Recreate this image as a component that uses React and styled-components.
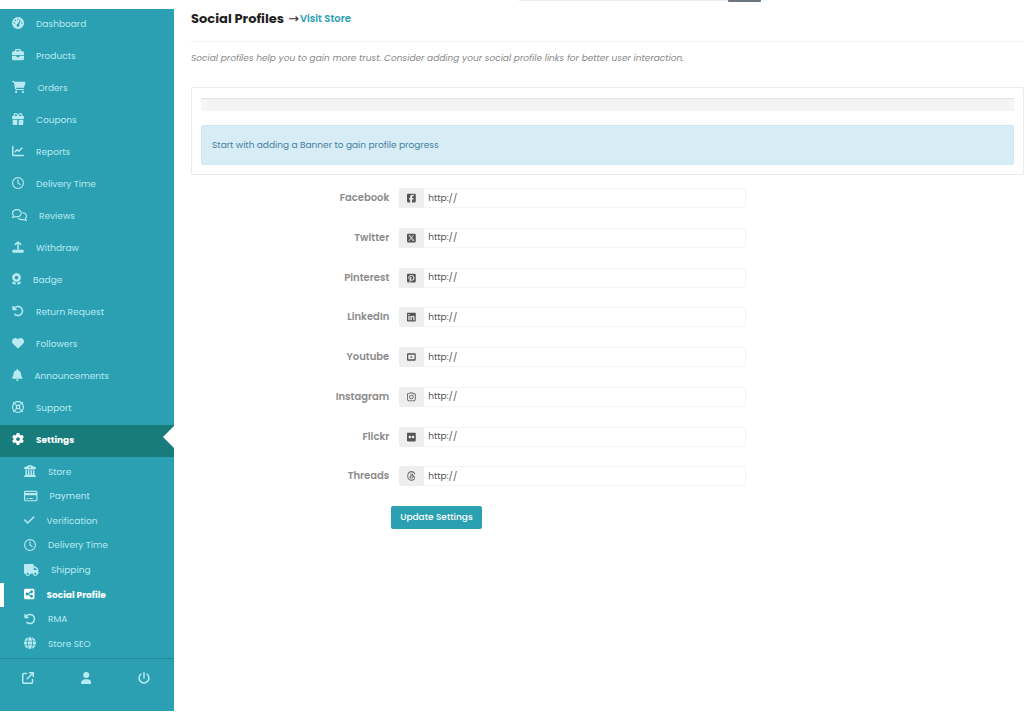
import styled, { createGlobalStyle, css } from "styled-components";
import { IconContext } from "react-icons";
import {
  FaArrowRotateLeft,
  FaArrowUpRightFromSquare,
  FaAward,
  FaBell,
  FaBriefcase,
  FaBuildingColumns,
  FaCartShopping,
  FaCheck,
  FaFlickr,
  FaGaugeHigh,
  FaGear,
  FaGift,
  FaGlobe,
  FaHeart,
  FaInstagram,
  FaLinkedin,
  FaPowerOff,
  FaRegClock,
  FaRegComments,
  FaRegCreditCard,
  FaRegLifeRing,
  FaSquareFacebook,
  FaSquarePinterest,
  FaSquareShareNodes,
  FaSquareXTwitter,
  FaThreads,
  FaTruck,
  FaUser,
} from "react-icons/fa6";

const ReportIcon = () => (
  <svg viewBox="0 0 512 512" fill="none" stroke="currentColor" strokeWidth="62" strokeLinecap="round" strokeLinejoin="round">
    <path d="M32 64v336c0 27 21 48 48 48h400M136 288l80-88 72 64 136-136" />
  </svg>
);

const UploadIcon = () => (
  <svg viewBox="0 0 512 512" fill="none" stroke="currentColor" strokeWidth="64" strokeLinecap="round" strokeLinejoin="round">
    <path d="M256 352V48M144 144L256 40l112 104" />
    <path d="M48 400h416v64H48z" fill="currentColor" />
  </svg>
);

const YoutubeIcon = () => (
  <svg viewBox="0 0 448 512" fill="currentColor">
    <path
      fillRule="evenodd"
      d="M64 64h320c35 0 64 29 64 64v256c0 35-29 64-64 64H64c-35 0-64-29-64-64V128c0-35 29-64 64-64zm0 96v192c0 9 7 16 16 16h288c9 0 16-7 16-16V160c0-9-7-16-16-16H80c-9 0-16 7-16 16zm122 34 102 62-102 62z"
    />
  </svg>
);

const menu = [
  { label: "Dashboard", icon: FaGaugeHigh },
  { label: "Products", icon: FaBriefcase },
  { label: "Orders", icon: FaCartShopping },
  { label: "Coupons", icon: FaGift },
  { label: "Reports", icon: ReportIcon },
  { label: "Delivery Time", icon: FaRegClock },
  { label: "Reviews", icon: FaRegComments },
  { label: "Withdraw", icon: UploadIcon },
  { label: "Badge", icon: FaAward },
  { label: "Return Request", icon: FaArrowRotateLeft },
  { label: "Followers", icon: FaHeart },
  { label: "Announcements", icon: FaBell },
  { label: "Support", icon: FaRegLifeRing },
  { label: "Settings", icon: FaGear, active: true },
];

const settings = [
  { label: "Store", icon: FaBuildingColumns },
  { label: "Payment", icon: FaRegCreditCard },
  { label: "Verification", icon: FaCheck },
  { label: "Delivery Time", icon: FaRegClock },
  { label: "Shipping", icon: FaTruck },
  { label: "Social Profile", icon: FaSquareShareNodes, active: true },
  { label: "RMA", icon: FaArrowRotateLeft },
  { label: "Store SEO", icon: FaGlobe },
];

const profiles = [
  { label: "Facebook", icon: FaSquareFacebook },
  { label: "Twitter", icon: FaSquareXTwitter },
  { label: "Pinterest", icon: FaSquarePinterest },
  { label: "LinkedIn", icon: FaLinkedin },
  { label: "Youtube", icon: YoutubeIcon },
  { label: "Instagram", icon: FaInstagram },
  { label: "Flickr", icon: FaFlickr },
  { label: "Threads", icon: FaThreads },
];

// "auto" lets each icon keep the width of its own view box
const iconContext = { size: "auto" };

export default function App() {
  return (
    <IconContext.Provider value={iconContext}>
      <GlobalStyle />
      <TopBar>
        <SearchInput aria-label="Search" />
        <SearchButton aria-label="Submit search" />
      </TopBar>
      <Layout>
        <Sidebar>
          <Menu>
            {menu.map(({ label, icon: Icon, active }) => (
              <li key={label}>
                <MenuLink href="#" $active={active}>
                  <Icon />
                  {label}
                </MenuLink>
              </li>
            ))}
          </Menu>
          <SubMenu>
            {settings.map(({ label, icon: Icon, active }) => (
              <li key={label}>
                <SubLink href="#" $active={active}>
                  <Icon />
                  {label}
                </SubLink>
              </li>
            ))}
          </SubMenu>
          <Shortcuts>
            <a href="#" aria-label="Visit store">
              <FaArrowUpRightFromSquare />
            </a>
            <a href="#" aria-label="Edit account">
              <FaUser />
            </a>
            <a href="#" aria-label="Log out">
              <FaPowerOff />
            </a>
          </Shortcuts>
        </Sidebar>
        <Content>
          <Header>
            <h1>Social Profiles</h1>
            <span>→</span>
            <a href="#">Visit Store</a>
          </Header>
          <Help>
            Social profiles help you to gain more trust. Consider adding your social profile links for better user
            interaction.
          </Help>
          <Panel>
            <Progress>0</Progress>
            <Alert>Start with adding a Banner to gain profile progress</Alert>
          </Panel>
          <form>
            <Fields>
              {profiles.map(({ label, icon: Icon }) => (
                <Field key={label}>
                  <label htmlFor={label}>{label}</label>
                  <InputGroup>
                    <Addon>
                      <Icon />
                    </Addon>
                    <input id={label} type="text" defaultValue="http://" />
                  </InputGroup>
                </Field>
              ))}
            </Fields>
            <SubmitButton type="button">Update Settings</SubmitButton>
          </form>
        </Content>
      </Layout>
    </IconContext.Provider>
  );
}

const GlobalStyle = createGlobalStyle`
  * {
    box-sizing: border-box;
  }
  body {
    margin: 0;
    background: #fff;
    font-family: Poppins, Inter, sans-serif;
    font-size: 9px;
    color: #333;
  }
  h1, p, ul {
    margin: 0;
    padding: 0;
  }
  ul {
    list-style: none;
  }
  a {
    text-decoration: none;
  }
  svg {
    display: block;
    flex: none;
    width: auto;
    height: 12px;
  }
`;

const TopBar = styled.header`
  display: flex;
  align-items: flex-start;
  height: 9px;
  padding-left: calc(50% + 7px);
`;

const SearchInput = styled.input`
  width: 209px;
  height: 1px;
  padding: 0;
  border: 0;
  background: #ececee;
`;

const SearchButton = styled.button`
  width: 33px;
  height: 2px;
  padding: 0;
  border: 0;
  border-radius: 0 0 1px 1px;
  background: #6b7580;
`;

const Layout = styled.div`
  display: flex;
  align-items: flex-start;
`;

const Sidebar = styled.nav`
  flex: 0 0 17%;
  background: #2aa0b2;
`;

const Menu = styled.ul`
  a {
    height: 32px;
    padding: 0 12px 2px;
  }
`;

const linkStyles = css`
  display: flex;
  align-items: center;
  gap: 12px;
  color: ${({ $active }) => ($active ? "#fff" : "#b9eaf1")};
  font-weight: ${({ $active }) => ($active ? 700 : 400)};
  white-space: nowrap;
  svg {
    margin-bottom: 2px;
  }
`;

const MenuLink = styled.a`
  ${linkStyles}
  ${({ $active }) =>
    $active &&
    css`
      position: relative;
      background: #187c7c;
      &::after {
        content: "";
        position: absolute;
        top: 1px;
        right: 0;
        border: 11px solid transparent;
        border-left-width: 0;
        border-right-color: #fff;
      }
    `}
`;

const SubMenu = styled.ul`
  display: grid;
  grid-auto-rows: 1fr;
  height: 201px;
  padding: 3px 0 1px;
`;

const SubLink = styled.a`
  ${linkStyles}
  height: 24px;
  padding-left: ${({ $active }) => ($active ? 20 : 24)}px;
  border-left: ${({ $active }) => ($active ? "4px solid #fff" : 0)};
`;

const Shortcuts = styled.div`
  display: flex;
  justify-content: space-between;
  height: 53px;
  padding: 13px 24px 13px 22px;
  border-top: 1px solid #23899a;
  a {
    color: #b9eaf1;
  }
`;

const Content = styled.main`
  flex: 1;
  min-width: 0;
  padding-left: 17px;
`;

const Header = styled.div`
  display: flex;
  align-items: center;
  height: 33px;
  padding-bottom: 12px;
  border-bottom: 1px solid #f2f2f2;
  h1 {
    font-size: 13px;
    line-height: 20px;
    font-weight: 700;
    color: #222;
  }
  span {
    margin: 0 1px 0 4px;
    font-family: "DejaVu Sans", sans-serif;
    font-size: 13px;
    line-height: 16px;
  }
  a {
    font-size: 10px;
    font-weight: 600;
    color: #2aa0b2;
  }
`;

const Help = styled.p`
  padding: 8px 0 21px;
  line-height: 16px;
  font-style: italic;
  color: #888;
`;

const Panel = styled.section`
  padding: 10px 9px 9px;
  border: 1px solid #ebebeb;
  border-radius: 2px;
`;

const Progress = styled.div`
  height: 13px;
  margin-bottom: 14px;
  border-radius: 2px;
  background: #f4f4f4;
  box-shadow: inset 0 1px 1px rgba(0, 0, 0, 0.08);
  line-height: 13px;
  color: #fff;
`;

const Alert = styled.div`
  padding: 11px 10px;
  border: 1px solid #cdeaf2;
  border-radius: 2px;
  background: #d8ecf5;
  line-height: 16px;
  color: #43809f;
`;

const Fields = styled.div`
  display: grid;
  grid-auto-rows: 1fr;
  height: 318px;
  margin-top: 13px;
`;

const Field = styled.div`
  display: grid;
  grid-template-columns: 25% 5fr 4fr;
  align-items: start;
  label {
    padding-right: 10px;
    font-size: 10px;
    line-height: 20px;
    font-weight: 600;
    text-align: right;
    color: #8c8c8c;
  }
`;

const InputGroup = styled.div`
  display: flex;
  height: 20px;
  input {
    flex: 1;
    min-width: 0;
    padding: 0 4px;
    border: 1px solid #f4f4f4;
    border-left: 0;
    border-radius: 0 2px 2px 0;
    background: #fff;
    font: inherit;
    color: #555;
  }
`;

const Addon = styled.span`
  display: flex;
  align-items: center;
  justify-content: center;
  width: 25px;
  border-radius: 2px 0 0 2px;
  background: #eee;
  color: #555;
  svg {
    height: 10px;
  }
`;

const SubmitButton = styled.button`
  min-width: 91px;
  height: 23px;
  margin-left: 24%;
  padding: 0 8px;
  border: 0;
  border-radius: 2px;
  background: #2aa0b2;
  font: inherit;
  font-weight: 500;
  color: #fff;
`;
